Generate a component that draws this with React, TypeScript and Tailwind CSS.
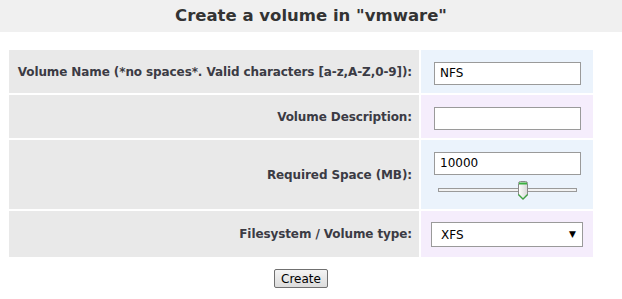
const labelCls =
  "flex items-center justify-end bg-[#e9e9e9] pr-[7px] text-[12px] tracking-[-0.1px] font-bold text-[#3b3b44]";
const inputCls =
  "h-[23px] w-[147px] border border-[#9a9a9a] bg-white px-[5px] text-[12px] text-black outline-none";

const SliderThumb = () => (
  <svg width="12" height="21" viewBox="0 0 12 21">
    <defs>
      <linearGradient id="tb" x1="0" x2="1" y1="0" y2="0">
        <stop offset="0" stopColor="#ffffff" />
        <stop offset="1" stopColor="#d8d8d8" />
      </linearGradient>
    </defs>
    <path d="M1.5 3.5 Q1.5 1.5 3.5 1.5 H8.5 Q10.5 1.5 10.5 3.5 V15 L6 19.5 L1.5 15 Z" fill="url(#tb)" stroke="#8a8a8a" />
    <path d="M2 2.5 H10 V4.5 H2 Z" fill="#3cb043" />
    <path d="M1.5 14.5 L6 19 L10.5 14.5" fill="none" stroke="#3aa83f" strokeWidth="1.2" />
  </svg>
);

export default function App() {
  return (
    <div className="h-[299px] w-[622px] bg-white font-['DejaVu_Sans',Verdana,sans-serif]">
      <div className="flex h-[32px] items-center justify-center bg-[#f0f0f0]">
        <h1 className="text-[16.5px] font-bold text-[#333]">Create a volume in "vmware"</h1>
      </div>

      <div className="ml-[9px] mt-[18px] grid w-[584px] grid-cols-[410px_172px] grid-rows-[43px_43px_69px_46px] gap-[2px]">
        <div className={labelCls}>Volume Name (*no spaces*. Valid characters [a-z,A-Z,0-9]):</div>
        <div className="bg-[#ebf3fc] pl-[13px] pt-[10px]">
          <input className={inputCls} defaultValue="NFS" />
        </div>

        <div className={labelCls}>Volume Description:</div>
        <div className="bg-[#f5edfc] pl-[13px] pt-[10px]">
          <input className={inputCls} defaultValue="" />
        </div>

        <div className={labelCls}>Required Space (MB):</div>
        <div className="bg-[#ebf3fc] pl-[13px] pt-[10px]">
          <input className={inputCls} defaultValue="10000" />
          <div className="relative ml-[4px] mt-[13px] h-[4px] w-[139px] border border-[#9a9a9a] bg-[#f2f2f2]">
            <div className="absolute left-[78px] top-[-9px]">
              <SliderThumb />
            </div>
          </div>
        </div>

        <div className={labelCls}>Filesystem / Volume type:</div>
        <div className="bg-[#f5edfc] pl-[10px] pt-[11px]">
          <div className="flex h-[25px] w-[152px] items-center justify-between border border-[#9a9a9a] bg-white pl-[9px] pr-[6px] text-[12px] text-black">
            <span>XFS</span>
            <span className="text-[9px]">▼</span>
          </div>
        </div>
      </div>

      <div className="mt-[12px] flex justify-center pr-[20px]">
        <button className="h-[19px] w-[54px] rounded-[2px] border border-[#707070] bg-gradient-to-b from-[#f4f4f4] to-[#dcdcdc] text-[12px] leading-none text-black">
          Create
        </button>
      </div>
    </div>
  );
}
